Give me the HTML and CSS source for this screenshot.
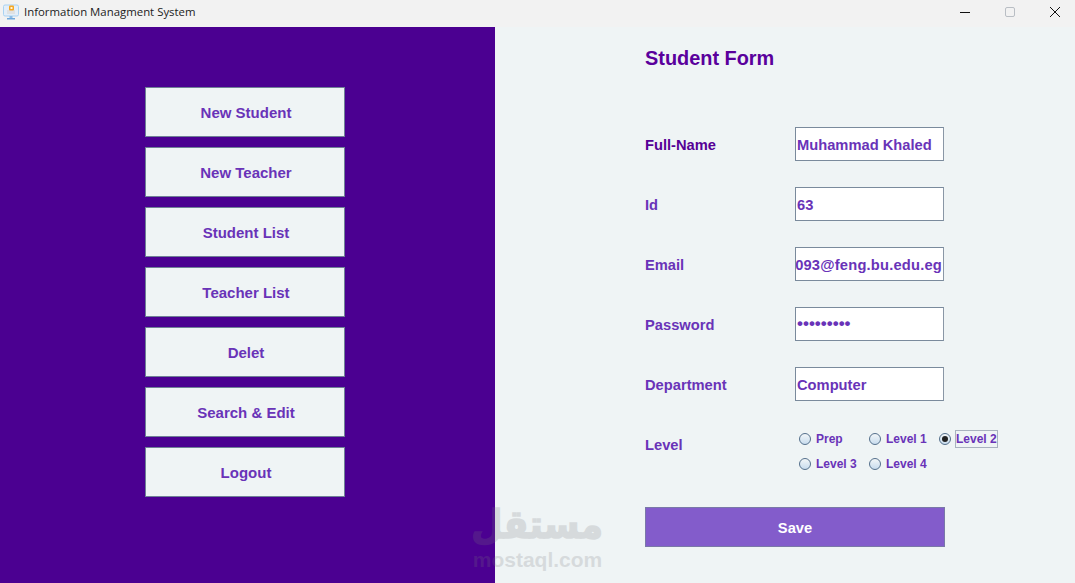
FILE: index.html
```html
<!DOCTYPE html>
<html lang="en">
<head>
  <meta charset="UTF-8">
  <title>Information Managment System</title>
  <link rel="stylesheet" href="styles.css">
</head>
<body>

<div class="window">
  <!-- Title bar -->
  <div class="titlebar">
    <svg class="app-icon" width="16" height="16" viewBox="0 0 16 16">
      <rect x="0.5" y="1" width="15" height="11" rx="1.5" fill="#e4eef8" stroke="#a9d2f2"/>
      <rect x="4" y="6" width="8" height="4" fill="#dfe1e3"/>
      <rect x="6" y="1.500" width="5" height="5" rx="1" fill="#f5a623"/>
      <rect x="7.5" y="3" width="2" height="2" fill="#fff3d6"/>
      <rect x="6.5" y="12" width="3" height="2" fill="#8dbce6"/>
      <rect x="4" y="14" width="8" height="1.5" fill="#6fa8dc"/>
    </svg>
    <span class="app-title">Information Managment System</span>
    <div class="win-controls">
      <svg width="12" height="12" viewBox="0 0 12 12"><path d="M1 6.500H11" stroke="#111" stroke-width="1"/></svg>
      <svg width="12" height="12" viewBox="0 0 12 12"><rect x="1.500" y="1.500" width="9" height="9" rx="1.500" fill="none" stroke="#b9bec4"/></svg>
      <svg width="12" height="12" viewBox="0 0 12 12"><path d="M1 1L11 11M11 1L1 11" stroke="#111" stroke-width="1"/></svg>
    </div>
  </div>

  <div class="content">
    <!-- Menu -->
    <div class="sidebar">
      <button class="menu-btn">New Student</button>
      <button class="menu-btn">New Teacher</button>
      <button class="menu-btn">Student List</button>
      <button class="menu-btn">Teacher List</button>
      <button class="menu-btn">Delet</button>
      <button class="menu-btn">Search &amp; Edit</button>
      <button class="menu-btn">Logout</button>
    </div>

    <!-- Student form -->
    <div class="form-panel">
      <h1 class="form-title">Student Form</h1>

      <div class="form-row">
        <label class="field-label dark">Full-Name</label>
        <div class="field">Muhammad Khaled</div>
      </div>
      <div class="form-row">
        <label class="field-label">Id</label>
        <div class="field">63</div>
      </div>
      <div class="form-row">
        <label class="field-label">Email</label>
        <div class="field clip"><span>093@feng.bu.edu.eg</span></div>
      </div>
      <div class="form-row">
        <label class="field-label">Password</label>
        <div class="field dots">•••••••••</div>
      </div>
      <div class="form-row">
        <label class="field-label">Department</label>
        <div class="field">Computer</div>
      </div>

      <div class="level-row">
        <label class="field-label">Level</label>
        <div class="radios">
          <div class="radio"><i class="dot"></i><span>Prep</span></div>
          <div class="radio"><i class="dot"></i><span>Level 1</span></div>
          <div class="radio"><i class="dot on"></i><span class="focused">Level 2</span></div>
          <div class="radio"><i class="dot"></i><span>Level 3</span></div>
          <div class="radio"><i class="dot"></i><span>Level 4</span></div>
        </div>
      </div>

      <button class="save-btn">Save</button>
    </div>
  </div>

  <!-- Watermark -->
  <div class="watermark">
    <div class="wm-ar" dir="rtl" lang="ar">مستقل</div>
    <div class="wm-en">mostaql.com</div>
  </div>
</div>

</body>
</html>
```

FILE: styles.css
```css
html, body {
  margin: 0;
  height: 100%;
  overflow: hidden;
}
body {
  font-family: 'Liberation Sans', Arial, sans-serif;
}
.window {
  position: relative;
  width: 1075px;
  height: 583px;
  display: flex;
  flex-direction: column;
}
.titlebar {
  height: 27px;
  box-sizing: border-box;
  background: #f2f2f2;
  display: flex;
  align-items: center;
  padding: 0 0 4px 3px;
  flex-shrink: 0;
}
.app-icon {
  margin-right: 5px;
}
.app-title {
  font-family: 'Open Sans', 'Noto Sans', sans-serif;
  font-size: 11.4px;
  color: #1c1c1c;
}
.win-controls {
  margin-left: auto;
  display: flex;
  gap: 33px;
  padding-right: 14px;
}
.win-controls svg {
  display: block;
}
.content {
  flex: 1;
  display: flex;
  background: #eff4f5;
}
.sidebar {
  width: 495px;
  background: #4b0091;
  display: flex;
  flex-direction: column;
  align-items: center;
  gap: 10px;
  padding: 60px 5px 0 0;
  box-sizing: border-box;
}
.menu-btn {
  width: 200px;
  height: 50px;
  background: #eff4f5;
  border: 1px solid #6f8096;
  color: #6933b8;
  font-family: inherit;
  font-size: 15px;
  font-weight: bold;
  padding: 1px 0 0 2px;
}
.form-panel {
  padding: 19px 0 0 150px;
}
.form-title {
  margin: 0 0 57px;
  font-size: 19.9px;
  line-height: 24px;
  font-weight: bold;
  color: #5a009c;
}
.form-row {
  display: flex;
  align-items: center;
  height: 34px;
  margin-bottom: 26px;
}
.field-label {
  width: 150px;
  padding-top: 1px;
  font-size: 14.7px;
  font-weight: bold;
  color: #6933b8;
}
.field-label.dark {
  color: #560096;
}
.field {
  width: 149px;
  height: 34px;
  box-sizing: border-box;
  background: #fff;
  border: 1px solid #7a8a9c;
  border-right-color: #8a97a6;
  padding-left: 1px;
  line-height: 34px;
  font-size: 14.7px;
  font-weight: bold;
  color: #6933b8;
  white-space: nowrap;
  overflow: hidden;
}
.field.clip {
  display: flex;
  justify-content: flex-end;
  padding-right: 1px;
  letter-spacing: 0.2px;
}
.field.dots {
  font-size: 17px;
  line-height: 32px;
}
.level-row {
  display: flex;
  align-items: flex-start;
  margin-top: 34px;
}
.level-row .field-label {
  line-height: 17px;
  padding-top: 2px;
}
.radios {
  display: grid;
  grid-template-columns: 70px 70px auto;
  row-gap: 7px;
  margin-left: 4px;
  margin-top: -5px;
}
.radio {
  display: flex;
  align-items: center;
  height: 18px;
  font-size: 12px;
  font-weight: bold;
  color: #6933b8;
}
.dot {
  width: 10px;
  height: 10px;
  border: 1px solid #55708c;
  border-radius: 50%;
  background: linear-gradient(#f2f6f8, #c8dcee);
  margin-right: 5px;
  flex-shrink: 0;
  position: relative;
}
.dot.on::after {
  content: "";
  position: absolute;
  left: 2px;
  top: 2px;
  width: 6px;
  height: 6px;
  border-radius: 50%;
  background: #222;
}
.focused {
  border: 1px solid #a9b2bf;
  line-height: 16px;
  margin-left: -1px;
}
.save-btn {
  display: block;
  width: 300px;
  height: 40px;
  margin-top: 34px;
  background: #835ccb;
  border: 1px solid #7a78a8;
  color: #fff;
  font-family: inherit;
  font-size: 14.7px;
  font-weight: bold;
  padding: 1px 0 0;
}
.watermark {
  position: absolute;
  left: 472px;
  top: 506px;
  width: 131px;
  text-align: center;
  color: #78787d;
  opacity: 0.2;
  pointer-events: none;
}
.wm-ar {
  font-family: 'DejaVu Sans', sans-serif;
  font-size: 36px;
  font-weight: bold;
  line-height: 42px;
  -webkit-text-stroke: 1.500px #78787d;
  transform: scaleY(1.1);
  transform-origin: bottom;
}
.wm-en {
  font-size: 21px;
  line-height: 24px;
  font-weight: bold;
}
```
